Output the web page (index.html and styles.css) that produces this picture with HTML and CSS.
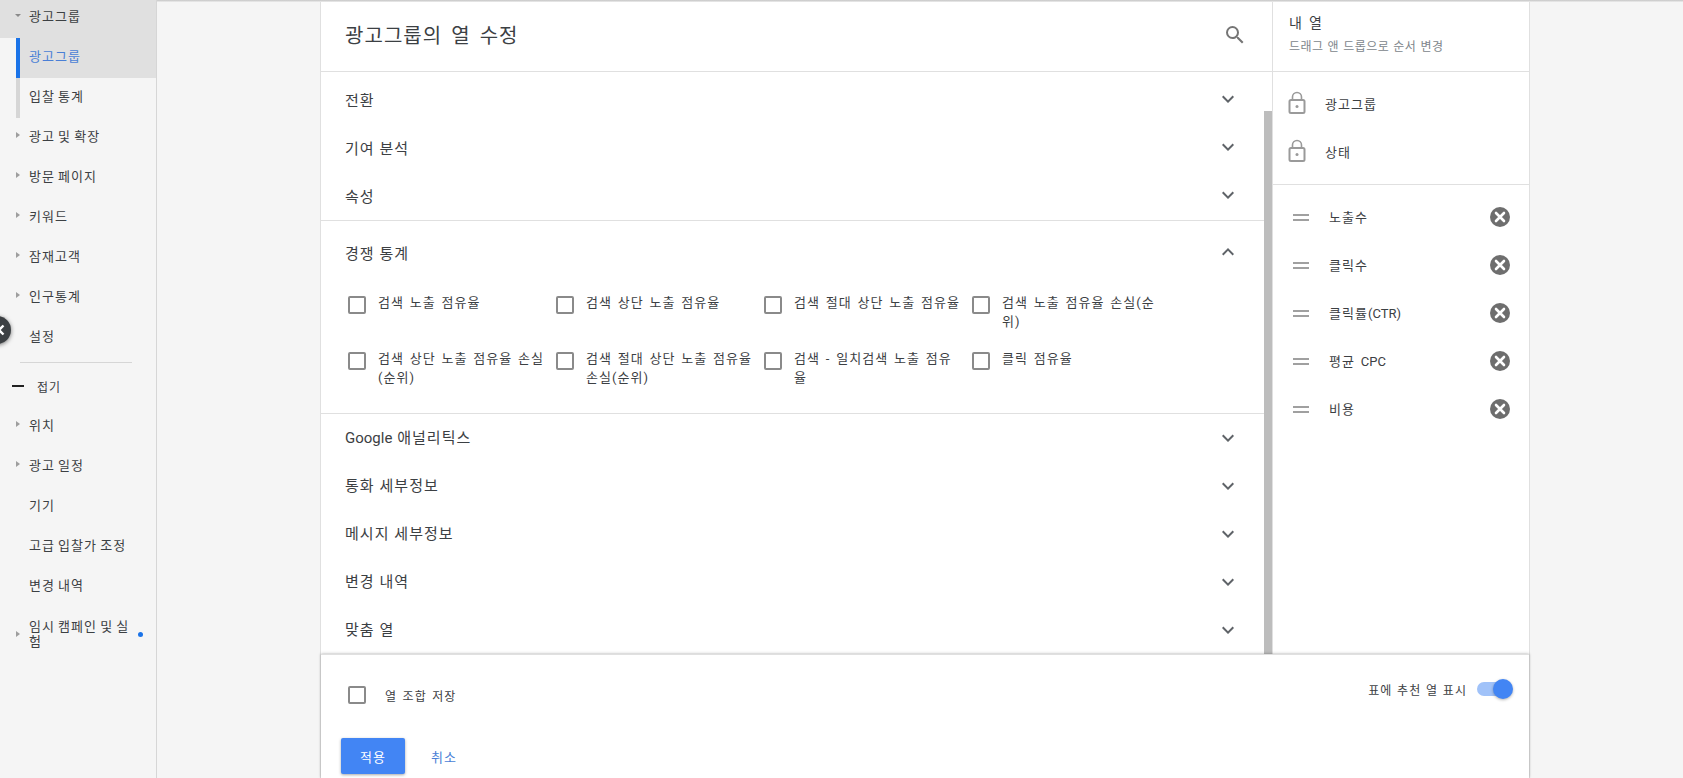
FILE: index.html
```html
<!DOCTYPE html>
<html lang="ko">
<head>
  <meta charset="UTF-8" />
  <title>광고그룹의 열 수정</title>
  <link rel="stylesheet" href="styles.css">
</head>
<body>
  <svg class="icon-defs" width="0" height="0">
    <symbol id="i-more" viewBox="0 0 24 24"><path d="M16.59 8.59L12 13.17 7.41 8.59 6 10l6 6 6-6z"/></symbol>
    <symbol id="i-less" viewBox="0 0 24 24"><path d="M12 8l-6 6 1.41 1.41L12 10.83l4.59 4.58L18 14z"/></symbol>
    <symbol id="i-lock" viewBox="0 0 18 24"><rect x="1.5" y="9" width="15" height="13" rx="1.5" fill="none" stroke="currentColor" stroke-width="2"/><path d="M4.5 9V6a4.5 4.5 0 0 1 9 0v3" fill="none" stroke="currentColor" stroke-width="1.6"/><circle cx="9" cy="15.5" r="1.5" fill="currentColor"/></symbol>
    <symbol id="i-remove" viewBox="0 0 20 20"><circle cx="10" cy="10" r="10" fill="#6e6e6e"/><path d="M6 6l8 8M14 6l-8 8" stroke="#fff" stroke-width="2.6" stroke-linecap="round"/></symbol>
  </svg>

  <div class="top-edge"></div>

  <!-- 왼쪽 메뉴 -->
  <nav class="sidebar">
    <div class="nav-item nav-open"><span class="arrow arrow-down"></span>광고그룹</div>
    <div class="nav-sub nav-sub-active">광고그룹</div>
    <div class="nav-sub">입찰 통계</div>
    <div class="nav-item"><span class="arrow"></span>광고 및 확장</div>
    <div class="nav-item"><span class="arrow"></span>방문 페이지</div>
    <div class="nav-item"><span class="arrow"></span>키워드</div>
    <div class="nav-item"><span class="arrow"></span>잠재고객</div>
    <div class="nav-item"><span class="arrow"></span>인구통계</div>
    <div class="nav-item"><span class="arrow arrow-none"></span>설정</div>
    <div class="nav-divider"></div>
    <div class="nav-fold"><span class="fold-bar"></span>접기</div>
    <div class="nav-item"><span class="arrow"></span>위치</div>
    <div class="nav-item"><span class="arrow"></span>광고 일정</div>
    <div class="nav-item"><span class="arrow arrow-none"></span>기기</div>
    <div class="nav-item"><span class="arrow arrow-none"></span>고급 입찰가 조정</div>
    <div class="nav-item"><span class="arrow arrow-none"></span>변경 내역</div>
    <div class="nav-item nav-two-line"><span class="arrow"></span><span class="nav-wrap">임시 캠페인 및 실험</span><span class="nav-dot"></span></div>
  </nav>

  <div class="collapse-knob">
    <svg width="8" height="12" viewBox="0 0 8 12"><path d="M6.5 1.5L2 6l4.5 4.5" fill="none" stroke="#fff" stroke-width="2.4"/></svg>
  </div>

  <!-- 열 수정 -->
  <main class="dialog">
    <div class="dialog-body">
      <section class="picker">
        <header class="picker-head">
          <h1 class="picker-title">광고그룹의 열 수정</h1>
          <svg class="search-icon" width="24" height="24" viewBox="0 0 24 24"><path d="M15.5 14h-.79l-.28-.27A6.471 6.471 0 0 0 16 9.5 6.5 6.5 0 1 0 9.5 16c1.61 0 3.09-.59 4.23-1.57l.27.28v.79l5 4.99L20.49 19l-4.99-5zm-6 0C7.01 14 5 11.99 5 9.5S7.01 5 9.5 5 14 7.01 14 9.5 11.99 14 9.5 14z"/></svg>
        </header>
        <div class="picker-list">
          <div class="scroll-thumb"></div>
          <div class="group group-top">
            <div class="row"><span>전환</span><svg class="chev"><use href="#i-more"/></svg></div>
            <div class="row"><span>기여 분석</span><svg class="chev"><use href="#i-more"/></svg></div>
            <div class="row"><span>속성</span><svg class="chev"><use href="#i-more"/></svg></div>
          </div>
          <div class="group group-open">
            <div class="row"><span>경쟁 통계</span><svg class="chev"><use href="#i-less"/></svg></div>
            <div class="check-grid">
              <label class="check"><span class="box"></span><span>검색 노출 점유율</span></label>
              <label class="check"><span class="box"></span><span>검색 상단 노출 점유율</span></label>
              <label class="check"><span class="box"></span><span>검색 절대 상단 노출 점유율</span></label>
              <label class="check"><span class="box"></span><span>검색 노출 점유율 손실(순위)</span></label>
              <label class="check"><span class="box"></span><span>검색 상단 노출 점유율 손실(순위)</span></label>
              <label class="check"><span class="box"></span><span>검색 절대 상단 노출 점유율 손실(순위)</span></label>
              <label class="check"><span class="box"></span><span>검색 - 일치검색 노출 점유율</span></label>
              <label class="check"><span class="box"></span><span>클릭 점유율</span></label>
            </div>
          </div>
          <div class="group">
            <div class="row"><span><span class="latin">Google</span> 애널리틱스</span><svg class="chev"><use href="#i-more"/></svg></div>
            <div class="row"><span>통화 세부정보</span><svg class="chev"><use href="#i-more"/></svg></div>
            <div class="row"><span>메시지 세부정보</span><svg class="chev"><use href="#i-more"/></svg></div>
            <div class="row"><span>변경 내역</span><svg class="chev"><use href="#i-more"/></svg></div>
            <div class="row"><span>맞춤 열</span><svg class="chev"><use href="#i-more"/></svg></div>
          </div>
        </div>
      </section>

      <aside class="mine">
        <header class="mine-head">
          <div class="mine-title">내 열</div>
          <div class="mine-sub">드래그 앤 드롭으로 순서 변경</div>
        </header>
        <div class="mine-locked">
          <div class="locked-row"><svg class="lock"><use href="#i-lock"/></svg>광고그룹</div>
          <div class="locked-row"><svg class="lock"><use href="#i-lock"/></svg>상태</div>
        </div>
        <div class="mine-items">
          <div class="col-row"><span class="handle"></span><span class="col-name">노출수</span><svg class="remove"><use href="#i-remove"/></svg></div>
          <div class="col-row"><span class="handle"></span><span class="col-name">클릭수</span><svg class="remove"><use href="#i-remove"/></svg></div>
          <div class="col-row"><span class="handle"></span><span class="col-name">클릭률<span class="latin">(CTR)</span></span><svg class="remove"><use href="#i-remove"/></svg></div>
          <div class="col-row"><span class="handle"></span><span class="col-name">평균 <span class="latin">CPC</span></span><svg class="remove"><use href="#i-remove"/></svg></div>
          <div class="col-row"><span class="handle"></span><span class="col-name">비용</span><svg class="remove"><use href="#i-remove"/></svg></div>
        </div>
      </aside>
    </div>

    <footer class="dialog-foot">
      <div class="foot-top">
        <label class="save-combo"><span class="box"></span><span>열 조합 저장</span></label>
        <div class="suggest">
          <span>표에 추천 열 표시</span>
          <span class="toggle"><span class="toggle-thumb"></span></span>
        </div>
      </div>
      <div class="foot-actions">
        <button class="btn-apply">적용</button>
        <button class="btn-cancel">취소</button>
      </div>
    </footer>
  </main>
</body>
</html>
```

FILE: styles.css
```css
html, body {
  height: 100%;
}

body {
  margin: 0;
  height: 778px;
  overflow: hidden;
  display: flex;
  position: relative;
  background-color: #f5f5f5;
  color: #3c4043;
  font-family: Roboto, "Noto Sans CJK KR", sans-serif;
  font-size: 13px;
  letter-spacing: 0.08em;
  word-spacing: 0.115em;
}

.latin {
  letter-spacing: 0;
  word-spacing: 0;
}

.icon-defs {
  position: absolute;
}

.top-edge {
  position: absolute;
  top: 0;
  left: 157px;
  right: 0;
  height: 2px;
  background: linear-gradient(#c4c4c4, #eeeeee);
  z-index: 5;
}

/* sidebar */
.sidebar {
  width: 156px;
  flex: none;
  border-right: 1px solid #d6d6d6;
  margin-top: -2px;
  word-spacing: -0.09em;
}

.nav-item {
  height: 40px;
  box-sizing: border-box;
  display: flex;
  align-items: center;
  padding: 0 0 6px 16px;
}

.nav-open {
  background-color: #e0e0e0;
}

.arrow {
  width: 13px;
  flex: none;
}

.arrow::before {
  content: "";
  display: block;
  width: 0;
  height: 0;
  border-left: 4px solid #9e9e9e;
  border-top: 3px solid transparent;
  border-bottom: 3px solid transparent;
}

.arrow-down::before {
  margin-left: -1px;
  border-left: 3px solid transparent;
  border-right: 3px solid transparent;
  border-top: 3px solid #8a8a8a;
  border-bottom: 0;
}

.arrow-none {
  visibility: hidden;
}

.nav-sub {
  height: 40px;
  box-sizing: border-box;
  margin-left: 16px;
  padding: 0 0 6px 9px;
  display: flex;
  align-items: center;
  border-left: 4px solid #d6d6d6;
}

.nav-sub-active {
  background-color: #e0e0e0;
  border-left-color: #1a73e8;
  color: #4a7fd6;
}

.nav-divider {
  height: 1px;
  background-color: #d6d6d6;
  margin: 4px 24px 6px 20px;
}

.nav-fold {
  height: 38px;
  box-sizing: border-box;
  display: flex;
  align-items: center;
  padding: 0 0 4px 12px;
  font-size: 12px;
}

.fold-bar {
  width: 12px;
  height: 2px;
  background-color: #212121;
  margin-right: 13px;
}

.nav-two-line {
  line-height: 15px;
  height: 48px;
  margin-top: 4px;
  padding-bottom: 2px;
}

.nav-wrap {
  width: 106px;
}

.nav-dot {
  width: 5px;
  height: 5px;
  border-radius: 50%;
  background-color: #1a73e8;
  margin-left: 3px;
}

.collapse-knob {
  position: absolute;
  left: -17px;
  top: 316px;
  width: 28px;
  height: 28px;
  border-radius: 50%;
  background-color: #3c4043;
  box-shadow: 0 1px 4px rgba(0,0,0,0.5);
  display: flex;
  align-items: center;
  justify-content: flex-end;
  padding-right: 6px;
  box-sizing: border-box;
}

/* dialog */
.dialog {
  width: 1208px;
  margin-left: 163px;
  flex: none;
  height: 778px;
  display: flex;
  flex-direction: column;
  background-color: white;
  border-left: 1px solid #e0e0e0;
  border-right: 1px solid #e0e0e0;
}

.dialog-body {
  display: flex;
  height: 654px;
}

.picker {
  width: 951px;
  flex: none;
  display: flex;
  flex-direction: column;
  border-right: 1px solid #e0e0e0;
}

.picker-head {
  height: 72px;
  flex: none;
  box-sizing: border-box;
  border-bottom: 1px solid #e0e0e0;
  display: flex;
  align-items: center;
  justify-content: space-between;
  padding: 0 25px 2px 24px;
}

.picker-title {
  margin: 0;
  font-size: 20px;
  font-weight: normal;
  word-spacing: 0.15em;
  color: #3c4043;
}

.search-icon {
  fill: #757575;
}

.picker-list {
  position: relative;
  flex: 1;
  padding-right: 8px;
}

.scroll-thumb {
  position: absolute;
  top: 39px;
  right: 0;
  bottom: 0;
  width: 8px;
  background-color: #bdbdbd;
}

.group {
  border-bottom: 1px solid #e0e0e0;
}

.group:last-child {
  border-bottom: none;
}

.group-top {
  padding: 3px 0 1px;
}

.group-open {
  padding: 7px 0 5px;
}

.row {
  height: 48px;
  font-size: 15px;
  letter-spacing: 0.07em;
  word-spacing: 0;
  display: flex;
  align-items: center;
  justify-content: space-between;
  padding: 0 24px 0 24px;
}

.row > span {
  margin-bottom: 3px;
}

.group-top .row > span,
.group-open .row > span {
  margin-bottom: 0;
}

.chev {
  width: 24px;
  height: 24px;
  fill: #5f6368;
}

.check-grid {
  display: grid;
  grid-template-columns: repeat(4, 208px);
  grid-auto-rows: 56px;
  padding: 20px 0 0 27px;
}

.check {
  display: flex;
  align-items: flex-start;
  line-height: 19px;
}

.check > span:last-child {
  width: 168px;
  margin-top: -3px;
}

.box {
  width: 18px;
  height: 18px;
  flex: none;
  box-sizing: border-box;
  border: 2px solid #8a8a8a;
  border-radius: 2px;
  margin-right: 12px;
}

/* my columns */
.mine {
  flex: 1;
}

.mine-head {
  height: 72px;
  box-sizing: border-box;
  border-bottom: 1px solid #e0e0e0;
  padding: 13px 0 0 16px;
}

.mine-title {
  font-size: 14px;
  line-height: 20px;
  margin-bottom: 4px;
  color: #3c4043;
}

.mine-sub {
  font-size: 12px;
  line-height: 20px;
  color: #80868b;
  letter-spacing: 0.04em;
  word-spacing: 0.05em;
}

.mine-locked {
  height: 113px;
  box-sizing: border-box;
  border-bottom: 1px solid #e0e0e0;
  padding-top: 7px;
}

.locked-row {
  height: 48px;
  display: flex;
  align-items: center;
  padding-left: 15px;
  color: #3c4043;
}

.lock {
  width: 18px;
  height: 24px;
  color: #9a9a9a;
  margin-right: 19px;
}

.mine-items {
  padding-top: 8px;
}

.col-row {
  height: 48px;
  display: flex;
  align-items: center;
  padding: 0 19px 0 20px;
}

.handle {
  width: 16px;
  height: 3px;
  flex: none;
  border-top: 2px solid #a0a0a0;
  border-bottom: 2px solid #a0a0a0;
  margin-right: 20px;
}

.col-name {
  flex: 1;
  margin-bottom: 2px;
}

.remove {
  width: 20px;
  height: 20px;
}

/* footer */
.dialog-foot {
  flex: 1;
  border-top: 1px solid #e0e0e0;
  box-shadow: 0 -1px 3px rgba(0,0,0,0.12), -1px 0 2px rgba(0,0,0,0.1), 1px 0 2px rgba(0,0,0,0.1);
  position: relative;
  padding: 23px 17px 0 20px;
}

.foot-top {
  display: flex;
  justify-content: space-between;
  height: 60px;
  font-size: 12px;
}

.save-combo {
  display: flex;
  align-items: center;
  height: 34px;
  padding-left: 7px;
}

.save-combo .box {
  margin-right: 19px;
}

.suggest {
  display: flex;
  align-items: center;
  height: 22px;
  word-spacing: 0.06em;
}

.toggle {
  position: relative;
  width: 26px;
  height: 14px;
  margin-left: 10px;
  margin-right: 9px;
  border-radius: 7px;
  background-color: #a0c2f9;
}

.toggle-thumb {
  position: absolute;
  top: -3px;
  right: -10px;
  width: 20px;
  height: 20px;
  border-radius: 50%;
  background-color: #4285f4;
  box-shadow: 0 1px 3px rgba(0,0,0,0.3);
}

.foot-actions {
  display: flex;
  align-items: center;
}

.foot-actions button {
  font-family: inherit;
  font-size: 13px;
  letter-spacing: inherit;
  border: none;
  cursor: pointer;
}

.btn-apply {
  width: 64px;
  height: 36px;
  background-color: #4285f4;
  color: white;
  border-radius: 2px;
  box-shadow: 0 1px 3px rgba(0,0,0,0.35);
}

.btn-cancel {
  background: none;
  color: #4a7fd6;
  margin-left: 26px;
  padding: 0;
}
```
